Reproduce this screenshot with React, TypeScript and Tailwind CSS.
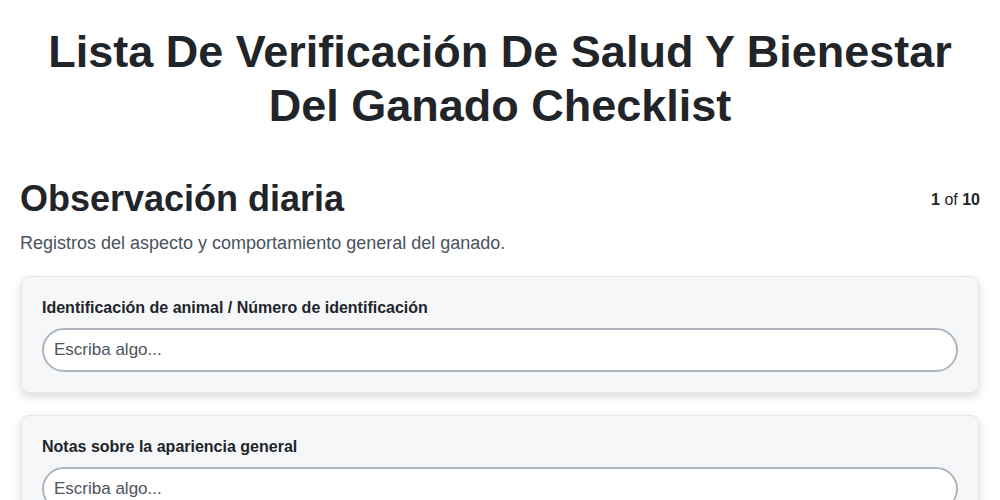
const fields = [
  'Identificación de animal / Número de identificación',
  'Notas sobre la apariencia general',
  'Comportamiento observado',
];

function Field({ label }: { label: string }) {
  return (
    <div className="mx-px rounded-lg border border-[#e6e8ec] bg-[#f6f7f9] px-5 pt-[21px] pb-[20px] shadow-[0_4px_10px_rgba(0,0,0,0.15)]">
      <label className="block text-[16px] leading-[20px] font-bold text-[#212529]">{label}</label>
      <input
        type="text"
        placeholder="Escriba algo..."
        className="mt-[10px] block h-[44px] w-full rounded-full border-2 border-[#aeb5bd] bg-white px-[10px] text-[17px] text-[#212529] placeholder:text-[#4d5460] outline-none"
      />
    </div>
  );
}

export default function App() {
  return (
    <div className="min-h-screen bg-white font-['Liberation_Sans',Arial,sans-serif] text-[#212529]">
      <h1 className="px-10 pt-[25px] text-center text-[45px] font-bold leading-[54px]">
        Lista De Verificación De Salud Y Bienestar Del Ganado Checklist
      </h1>
      <div className="px-5 pt-[44px]">
        <div className="flex items-start justify-between">
          <h2 className="text-[36px] font-bold leading-[44px]">Observación diaria</h2>
          <div className="pt-[11px] text-[16px]">
            <span className="font-bold">1</span> of <span className="font-bold">10</span>
          </div>
        </div>
        <p className="mt-[10px] text-[18px] leading-[24px] text-[#4a5160]">
          Registros del aspecto y comportamiento general del ganado.
        </p>
        <div className="mt-[21px] flex flex-col gap-[22px]">
          {fields.map((f) => (
            <Field key={f} label={f} />
          ))}
        </div>
      </div>
    </div>
  );
}
